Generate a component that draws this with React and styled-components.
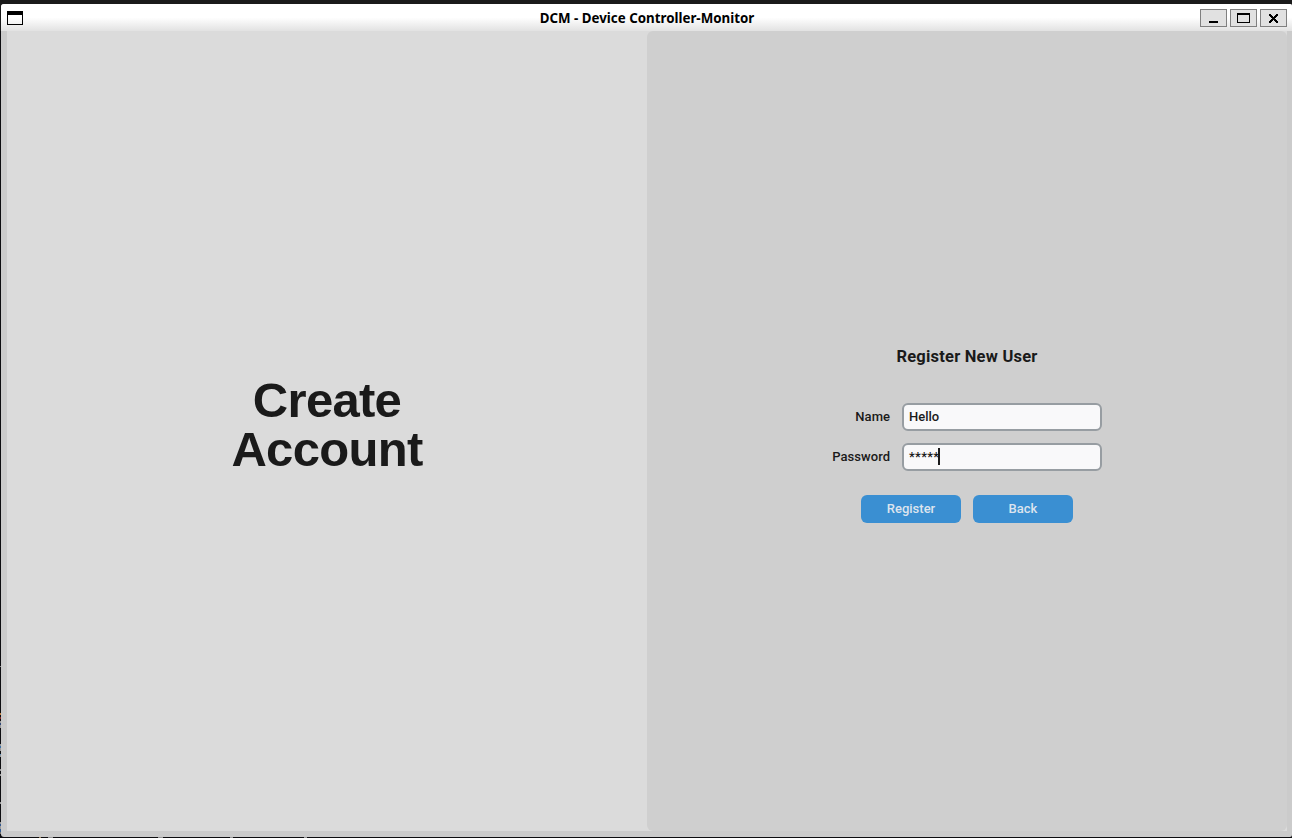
import React from "react";
import styled, { createGlobalStyle } from "styled-components";

const GlobalStyle = createGlobalStyle`
  * { box-sizing: border-box; }
  html, body { margin: 0; padding: 0; overflow: hidden; }
`;

/* Slivers of the terminal behind the window show along the left and bottom edges. */
const Desktop = styled.div`
  width: 1292px;
  height: 838px;
  padding: 4px 0 1px 1px;
  background:
    linear-gradient(#0000 666px, #888 666px 667px, #0000 667px 713px, #c08040 713px 715px,
      #0000 715px 717px, #802828 717px 719px, #0000 719px 721px, #999 721px 723px,
      #304878 723px 725px, #999 725px 728px, #0000 728px 744px, #999 744px 746px,
      #3870a8 746px 748px, #999 748px 751px, #0000 751px 754px, #6090b8 754px 755px,
      #999 755px 757px, #0000 757px 769px, #999 769px 771px, #0000 771px 774px,
      #999 774px 776px, #0000 776px 802px, #999 802px 804px, #0000 804px 822px,
      #999 822px 824px, #305890 824px 826px, #999 826px 829px, #305890 829px 832px,
      #777 832px 834px, #0000 834px) 0 0 / 1px 838px no-repeat,
    linear-gradient(90deg, #0000 39px, #a08860 39px 41px, #0000 41px 48px, #999 48px 53px,
      #0000 53px 158px, #999 158px 163px, #0000 163px 230px, #999 230px 233px,
      #0000 233px 304px, #999 304px 307px, #0000 307px) 0 837px / 1292px 1px no-repeat,
    linear-gradient(#1a1a1a 0 31px, #0d0d10 31px);
  overflow: hidden;
`;

const Window = styled.div`
  width: 1291px;
  height: 833px;
  display: flex;
  flex-direction: column;
  background: #cbcbcb;
  border-radius: 3px 2px 2px 3px;
  overflow: hidden;
`;

const TitleBar = styled.header`
  height: 27px;
  flex: none;
  display: grid;
  grid-template-columns: 92px 1fr 92px;
  align-items: center;
  padding: 0 5px 0 6px;
  background: linear-gradient(#ffffff 0, #ffffff 50%, #e2e2e2 100%);
`;

const Title = styled.h1`
  margin: 0;
  padding-top: 2px;
  text-align: center;
  white-space: nowrap;
  font: 700 13.33px/25px "Noto Sans", sans-serif;
  color: #000;
`;

const Controls = styled.div`
  display: flex;
  justify-content: flex-end;
  gap: 3px;
  padding-top: 1px;
`;

const ControlButton = styled.button`
  width: 27px;
  height: 18px;
  padding: 0;
  border: 1px solid #808080;
  border-radius: 0;
  background: #e1e1e1;
  display: flex;
`;

const Glyph = styled.svg`
  display: block;
  flex: none;
  shape-rendering: crispEdges;
`;

const Content = styled.main`
  flex: 1;
  display: grid;
  grid-template-columns: 640px 640px;
  padding: 0 4px 6px 6px;
`;

const Hero = styled.section`
  display: flex;
  align-items: center;
  justify-content: center;
  padding: 0 0 13px;
  background: #dbdbdb;
`;

const HeroTitle = styled.h2`
  margin: 0;
  text-align: center;
  font: 700 49px/49px "Liberation Sans", Arial, sans-serif;
  letter-spacing: -0.7px;
  color: #1a1a1a;
`;

const FormSide = styled.div`
  background: #dbdbdb;
`;

const FormPanel = styled.section`
  height: 100%;
  display: flex;
  flex-direction: column;
  align-items: center;
  padding-top: 316px;
  border-radius: 6px;
  background: #cfcfcf;
  font: 500 13px/16px Roboto, sans-serif;
  color: #1a1a1a;
`;

const FormTitle = styled.h3`
  height: 20px;
  margin: 0 0 36px;
  font: 700 16.5px/20px Roboto, sans-serif;
  letter-spacing: 0.22px;
`;

const Fields = styled.div`
  display: grid;
  grid-template-columns: 60px 200px;
  gap: 12px;
  padding-right: 2px;
`;

const FieldLabel = styled.label`
  text-align: right;
  line-height: 27px;
  white-space: nowrap;
  letter-spacing: 0.03px;
`;

const Field = styled.div`
  height: 28px;
  display: flex;
  align-items: center;
  padding: 0 5px 1px;
  border: 2px solid #979da2;
  border-radius: 6px;
  background: #f9f9fa;
  letter-spacing: ${({ $masked }) => ($masked ? "0.3px" : "normal")};
`;

const Caret = styled.span`
  width: 2px;
  height: 17px;
  margin-left: -1.5px;
  background: #1a1a1a;
`;

const Actions = styled.div`
  display: flex;
  gap: 12px;
  margin-top: 24px;
`;

const Action = styled.button`
  width: 100px;
  height: 28px;
  padding: 0 0 1px;
  border: 0;
  border-radius: 6px;
  background: #3a8fd2;
  color: #dce4ee;
  font: inherit;
`;

export default function App() {
  return (
    <Desktop>
      <GlobalStyle />
      <Window>
        <TitleBar>
          <Glyph width="16" height="14" viewBox="0 0 16 14">
            <path d="M0 0h16v14H0zM1 4v9h14V4z" fillRule="evenodd" />
          </Glyph>
          <Title>DCM - Device Controller-Monitor</Title>
          <Controls>
            <ControlButton aria-label="Minimize">
              <Glyph width="25" height="16" viewBox="0 0 25 16">
                <path d="M8 11h9v2H8z" />
              </Glyph>
            </ControlButton>
            <ControlButton aria-label="Maximize">
              <Glyph width="25" height="16" viewBox="0 0 25 16">
                <path d="M6 3h13v10H6zM7 5v7h11V5z" fillRule="evenodd" />
              </Glyph>
            </ControlButton>
            <ControlButton aria-label="Close">
              <Glyph width="25" height="16" viewBox="0 0 25 16">
                <path d="M8 4h2v1h1v1h1v1h1v-1h1v-1h1v-1h2v2h-1v1h-1v1h-1v1h1v1h1v1h1v2h-2v-1h-1v-1h-1v-1h-1v1h-1v1h-1v1H8v-2h1v-1h1v-1h1v-1h-1v-1H9v-1H8z" />
              </Glyph>
            </ControlButton>
          </Controls>
        </TitleBar>
        <Content>
          <Hero>
            <HeroTitle>Create<br />Account</HeroTitle>
          </Hero>
          <FormSide>
            <FormPanel>
              <FormTitle>Register New User</FormTitle>
              <Fields>
                <FieldLabel>Name</FieldLabel>
                <Field>Hello</Field>
                <FieldLabel>Password</FieldLabel>
                <Field $masked>*****<Caret /></Field>
              </Fields>
              <Actions>
                <Action>Register</Action>
                <Action>Back</Action>
              </Actions>
            </FormPanel>
          </FormSide>
        </Content>
      </Window>
    </Desktop>
  );
}
